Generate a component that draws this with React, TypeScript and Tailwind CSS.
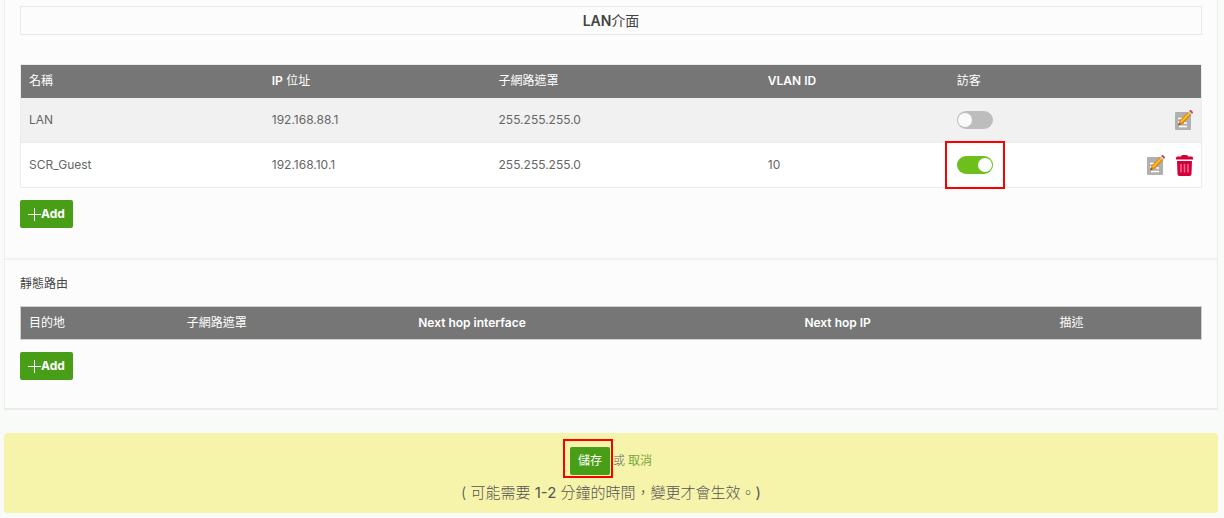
// src/App.tsx
import { useState } from 'react'

interface LanRow { name: string; ip: string; mask: string; vlan: string; guest: boolean; removable: boolean }

const LAN_ROWS: LanRow[] = [
  { name: 'LAN', ip: '192.168.88.1', mask: '255.255.255.0', vlan: '', guest: false, removable: false },
  { name: 'SCR_Guest', ip: '192.168.10.1', mask: '255.255.255.0', vlan: '10', guest: true, removable: true },
]

function EditIcon() {
  return (
    <svg width="18" height="20" viewBox="0 0 18 20" aria-hidden="true">
      <rect x="0" y="2" width="16" height="18" rx="1" fill="#b0b0b0" />
      <path d="M3 8.5h4M3 12h2M4 16.5h8M9 13h3" stroke="#fff" strokeWidth="1.3" />
      <path d="M3.4 15.2l1-4.4L13 2l3.2 3-8.6 9z" fill="#e08a10" />
      <path d="M5.8 12.2l8.6-8.8" stroke="#ffc928" strokeWidth="1.6" />
      <path d="M3.4 15.2l.5-2.3 1.7 1.6z" fill="#5a4632" />
      <path d="M13 2l1.2-1.2 3.1 3L16.2 5z" fill="#c9d3d8" />
      <path d="M14.2.8l.7-.6q.6-.4 1.2.1l1.6 1.5q.5.6 0 1.2l-.5.7z" fill="#d4315c" />
    </svg>
  )
}

function TrashIcon() {
  return (
    <svg width="17" height="21" viewBox="0 0 17 21" aria-hidden="true">
      <path d="M0 3q0-1.5 1.5-1.5H5Q5.2 0 6.5 0h4Q11.800 0 12 1.500h3.500Q17 1.500 17 3v1.500H0z" fill="#d4003c" />
      <path d="M1 6h15l-.5 13q0 2-2 2h-10q-2 0-2-2z" fill="#d4003c" />
      <path d="M5 9v8.500M8.500 9v8.500M12 9v8.500" stroke="#f06a8c" strokeWidth="1.500" />
    </svg>
  )
}

function AddButton() {
  return (
    <button type="button" className="flex h-7 items-center rounded-xs bg-[#489e16] px-2 text-xs font-bold text-white hover:bg-[#3f8c12]">
      <svg width="13" height="13" viewBox="0 0 13 13" aria-hidden="true">
        <path d="M6.5 0v13M0 6.5h13" stroke="#fff" strokeWidth="1" />
      </svg>
      Add
    </button>
  )
}

function GuestSwitch({ label, initial }: { label: string; initial: boolean }) {
  const [on, setOn] = useState(initial)
  return (
    <input
      type="checkbox"
      role="switch"
      aria-label={label}
      checked={on}
      onChange={e => setOn(e.target.checked)}
      className="flex h-[18px] w-9 cursor-pointer appearance-none items-center rounded-full bg-[#bdbdbd] px-px before:size-[14px] before:rounded-full before:bg-[#fafafa] checked:justify-end checked:bg-[#6dc01b] checked:before:bg-white"
    />
  )
}

export default function App() {
  return (
    <div
      lang="zh-Hant"
      className="min-h-screen bg-[#f9fbf8] pr-1.5 pb-1 pl-1 font-['Inter','Noto_Sans_CJK_TC',sans-serif] text-xs text-[#666]"
    >
      <main className="border-x border-b-2 border-[#ececec] bg-[#fcfcfc]">
        <section className="px-[15px] pt-1.5 pb-[30px]">
          <h2 className="flex h-[29px] items-center justify-center border border-[#e8e8e8] text-sm text-[#444]">
            <b className="font-semibold">LAN</b>介面
          </h2>

          <table className="mt-[29px] w-full table-fixed border-collapse border border-[#ececec] bg-white text-left">
            <colgroup>
              <col className="w-[20.6%]" />
              <col className="w-[19.2%]" />
              <col className="w-[22.8%]" />
              <col className="w-[16%]" />
              <col />
            </colgroup>
            <thead>
              <tr className="h-[33px] bg-[#767676] text-white">
                <th className="px-2 font-normal">名稱</th>
                <th className="px-2 font-normal"><b className="font-semibold">IP</b> 位址</th>
                <th className="px-2 font-normal">子網路遮罩</th>
                <th className="px-2 font-semibold">VLAN ID</th>
                <th className="px-2 font-normal">訪客</th>
              </tr>
            </thead>
            <tbody>
              {LAN_ROWS.map(row => (
                <tr key={row.name} className="h-[45px] border-b border-[#ececec] odd:bg-[#f1f1f1]">
                  <td className="px-2">{row.name}</td>
                  <td className="px-2">{row.ip}</td>
                  <td className="px-2">{row.mask}</td>
                  <td className="px-2">{row.vlan}</td>
                  <td className="px-2">
                    <div className="flex items-center justify-between">
                      <div className="relative">
                        <GuestSwitch label={`訪客 ${row.name}`} initial={row.guest} />
                        {row.guest && <span className="pointer-events-none absolute -inset-x-3 -inset-y-[15px] border-2 border-[#fa0000]" />}
                      </div>
                      <div className="flex items-center gap-[11px]">
                        <button type="button" aria-label="編輯"><EditIcon /></button>
                        {row.removable && <button type="button" aria-label="刪除"><TrashIcon /></button>}
                      </div>
                    </div>
                  </td>
                </tr>
              ))}
            </tbody>
          </table>

          <div className="mt-3">
            <AddButton />
          </div>
        </section>

        <section className="border-t-2 border-[#f1f1f1] px-[15px] pt-4 pb-7">
          <h3 className="leading-4 text-[#444]">靜態路由</h3>

          <table className="mt-3.5 w-full table-fixed border-collapse border border-[#d0d0d0] text-left">
            <colgroup>
              <col className="w-[13.4%]" />
              <col className="w-[19.6%]" />
              <col className="w-[32.7%]" />
              <col className="w-[21.6%]" />
              <col />
            </colgroup>
            <thead>
              <tr className="h-[33px] bg-[#767676] text-white">
                <th className="px-2 font-normal">目的地</th>
                <th className="px-2 font-normal">子網路遮罩</th>
                <th className="px-2 font-semibold">Next hop interface</th>
                <th className="px-2 font-semibold">Next hop IP</th>
                <th className="px-2 font-normal">描述</th>
              </tr>
            </thead>
          </table>

          <div className="mt-3">
            <AddButton />
          </div>
        </section>
      </main>

      <footer className="mt-[23px] flex flex-col items-center gap-2 rounded bg-[#f6f3aa] pt-3.5 pb-2.5">
        <div className="flex items-center gap-[3px]">
          <div className="relative">
            <button type="submit" className="h-7 rounded-xs bg-[#489e16] px-2 text-white hover:bg-[#3f8c12]">儲存</button>
            <span className="pointer-events-none absolute -top-2 -right-[3px] -bottom-[3px] -left-[7px] border-2 border-[#fa0000]" />
          </div>
          <span className="font-light">或</span>
          <a href="#cancel" className="text-[#76a83c]">取消</a>
        </div>
        <p className="text-[15px] leading-5 font-light text-[#555]">
          ( 可能需要 <span className="font-normal">1-2</span> 分鐘的時間，變更才會生效。<span className="font-normal">)</span>
        </p>
      </footer>
    </div>
  )
}
